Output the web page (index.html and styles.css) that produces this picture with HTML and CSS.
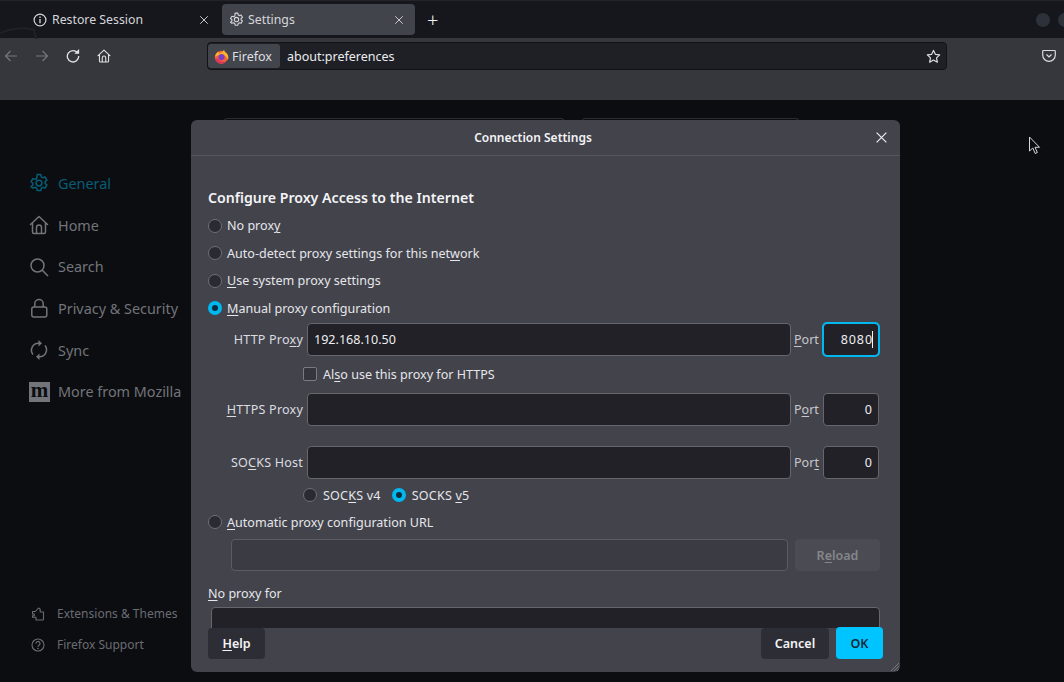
FILE: index.html
```html
<!DOCTYPE html>
<html lang="en">
<head>
<meta charset="utf-8">
<title>Settings</title>
<link rel="stylesheet" href="styles.css">
</head>
<body>
<svg class="defs" width="0" height="0">
  <symbol id="gear" viewBox="0 0 20 20"><path fill="none" stroke="currentColor" stroke-width="1.5" stroke-linejoin="round" d="M8.2 1.5h3.6l.5 2.4 1.5.9 2.3-.8 1.8 3.1-1.8 1.6v1.7l1.8 1.6-1.8 3.1-2.3-.8-1.5.9-.5 2.4H8.2l-.5-2.4-1.5-.9-2.3.8L2.1 13.6l1.8-1.6v-1.7L2.1 8.7l1.8-3.1 2.3.8 1.5-.9z"/><circle cx="10" cy="10.1" r="2.9" fill="none" stroke="currentColor" stroke-width="1.5"/></symbol>
  <symbol id="house" viewBox="0 0 20 20"><path fill="none" stroke="currentColor" stroke-width="1.5" stroke-linejoin="round" stroke-linecap="round" d="M1.5 9.5 10 1.5l8.500 8M3.500 8v9a1.500 1.500 0 0 0 1.500 1.500h10a1.500 1.500 0 0 0 1.500-1.500V8M7.500 18.500V12.500a2.500 2.500 0 0 1 5 0v6"/></symbol>
  <symbol id="close" viewBox="0 0 12 12"><path fill="none" stroke="currentColor" stroke-width="1.200" d="M1.500 1.500l9 9M10.500 1.500l-9 9"/></symbol>
</svg>

<header class="tabbar">
  <svg class="wallpaper" viewBox="0 0 90 38"><path fill="none" stroke="#1f2126" stroke-width="2" d="M0 32C12 27 26 26 34 29l2 9"/></svg>
  <div class="tab">
    <svg class="tab-icon" viewBox="0 0 14 14"><circle cx="7" cy="7" r="5.900" fill="none" stroke="currentColor" stroke-width="1.200"/><path stroke="currentColor" stroke-width="1.300" d="M7 6v4.200M7 3.600v1.300"/></svg>
    <span class="tab-title">Restore Session</span>
    <svg class="tab-close"><use href="#close"/></svg>
  </div>
  <div class="tab tab-active">
    <svg class="tab-icon tab-gear"><use href="#gear"/></svg>
    <span class="tab-title">Settings</span>
    <svg class="tab-close"><use href="#close"/></svg>
  </div>
  <span class="new-tab">+</span>
  <div class="win-buttons"><span class="win-dot"></span><span class="win-dot"></span></div>
</header>

<div class="toolbar">
  <div class="nav-row">
    <div class="nav-buttons">
      <svg class="nav-icon dim" viewBox="0 0 14 14"><path fill="none" stroke="currentColor" stroke-width="1.200" d="M13 7H1.500M6.500 2 1.500 7l5 5"/></svg>
      <svg class="nav-icon dim" viewBox="0 0 14 14"><path fill="none" stroke="currentColor" stroke-width="1.200" d="M1 7h11.500M7.500 2l5 5-5 5"/></svg>
      <svg class="nav-icon" viewBox="0 0 14 14"><path fill="none" stroke="currentColor" stroke-width="1.300" d="M11.800 4.200A5.700 5.700 0 1 0 12.700 7"/><path fill="currentColor" d="M8.300 4.800h4.800V0z"/></svg>
      <svg class="nav-icon"><use href="#house"/></svg>
    </div>
    <div class="urlbar">
      <div class="identity">
        <svg class="fx-logo" viewBox="0 0 16 16">
          <circle cx="7.800" cy="8.800" r="6.900" fill="#f3603a"/>
          <path fill="#ffb32c" d="M1 8C1.800 5 3.500 3.300 5 2.800c-.4 1 0 1.600.6 1.900C7 3.500 9.500 3.700 10.500.8c1 1.300 1 2 1 2.500 2 .8 3.800 2.900 3.800 5.700 0 1-.3 2-.7 2.800C13.800 8.500 12 7 9.500 6.500 6 6 3.500 7 1 8z"/>
          <path fill="#e0335f" d="M1.200 10c1 3 3.800 5.500 6.800 5.500 2 0 3.800-.8 5-2.400C10.500 14 6 13.500 4 10z"/>
          <circle cx="8" cy="8.600" r="3.300" fill="#7a3fc4"/>
        </svg>
        <span>Firefox</span>
      </div>
      <span class="url-text">about:preferences</span>
      <svg class="star" viewBox="0 0 16 16"><path fill="none" stroke="currentColor" stroke-width="1.300" stroke-linejoin="round" d="M8 1.500l2 4.200 4.600.6-3.400 3.200.9 4.600L8 11.800l-4.100 2.300.9-4.600L1.400 6.300 6 5.700z"/></svg>
    </div>
    <svg class="pocket" viewBox="0 0 14 14"><path fill="none" stroke="currentColor" stroke-width="1.200" d="M1.500 1.500h11a.8.8 0 0 1 .8.800V6a6.300 6.300 0 0 1-12.600 0V2.300a.8.8 0 0 1 .8-.8z"/><path fill="none" stroke="currentColor" stroke-width="1.200" d="M4.500 5.500 7 8l2.500-2.500"/></svg>
  </div>
</div>

<main class="content">
  <nav class="side-nav">
    <a class="side-item side-active"><svg class="side-icon"><use href="#gear"/></svg>General</a>
    <a class="side-item"><svg class="side-icon"><use href="#house"/></svg>Home</a>
    <a class="side-item"><svg class="side-icon" viewBox="0 0 20 20"><circle cx="8.500" cy="8.500" r="6.500" fill="none" stroke="currentColor" stroke-width="1.500"/><path stroke="currentColor" stroke-width="1.600" d="M13.300 13.300l5.700 5.700"/></svg>Search</a>
    <a class="side-item"><svg class="side-icon" viewBox="0 0 20 20"><rect x="2.800" y="9" width="15" height="10" rx="2" fill="none" stroke="currentColor" stroke-width="1.500"/><path fill="none" stroke="currentColor" stroke-width="1.500" d="M5.800 9V5.700a4.200 4.200 0 0 1 8.400 0V9"/></svg>Privacy &amp; Security</a>
    <a class="side-item"><svg class="side-icon" viewBox="0 0 20 20"><path fill="none" stroke="currentColor" stroke-width="1.500" d="M4 14.500A7 7 0 0 1 10 3.200h1.500M16 5.500A7 7 0 0 1 10 16.800H8.500"/><path fill="currentColor" d="M9.500 0v6.500l3.500-3.200zM10.500 13.500V20L7 16.800z"/></svg>Sync</a>
    <a class="side-item"><span class="moz-logo">m</span>More from Mozilla</a>
  </nav>
  <nav class="side-foot">
    <a class="foot-item"><svg class="foot-icon" viewBox="0 0 14 14"><path fill="none" stroke="currentColor" stroke-width="1.100" stroke-linejoin="round" d="M1.500 4.500h2.800L7.500 1l1.700 1.200V5H12.500v7a1 1 0 0 1-1 1H5v-2.700H1.500V8.800h1.800V7H1.500z"/></svg>Extensions &amp; Themes</a>
    <a class="foot-item"><svg class="foot-icon" viewBox="0 0 14 14"><circle cx="7" cy="7" r="6" fill="none" stroke="currentColor" stroke-width="1.100"/><path fill="none" stroke="currentColor" stroke-width="1.200" d="M5 5.500a2 2 0 1 1 3 1.700c-.7.400-1 .8-1 1.500"/><circle cx="7" cy="10.500" r=".8" fill="currentColor"/></svg>Firefox Support</a>
  </nav>
  <div class="ghost-box ghost-a"></div>
  <div class="ghost-box ghost-b"></div>
</main>

<div class="cursor">
  <svg viewBox="0 0 14 20" width="14" height="20"><path fill="#0c0d11" stroke="#d8d8da" stroke-width="1" d="M1.500 1v14l3.300-3 2.400 5.500 2.200-1-2.400-5.200h4.500z"/></svg>
</div>

<section class="dialog">
  <header class="dialog-head">
    <h1 class="dialog-title">Connection Settings</h1>
    <svg class="dialog-close"><use href="#close"/></svg>
  </header>
  <div class="dialog-body">
    <h2 class="section-title">Configure Proxy Access to the Internet</h2>
    <label class="radio-row"><span class="radio"></span><span>No prox<u>y</u></span></label>
    <label class="radio-row"><span class="radio"></span><span>Auto-detect proxy settings for this net<u>w</u>ork</span></label>
    <label class="radio-row"><span class="radio"></span><span><u>U</u>se system proxy settings</span></label>
    <label class="radio-row"><span class="radio radio-on"></span><span><u>M</u>anual proxy configuration</span></label>

    <div class="proxy-row">
      <span class="proxy-label">HTTP Pro<u>x</u>y</span>
      <div class="field host-field">192.168.10.50</div>
      <span class="port-label"><u>P</u>ort</span>
      <div class="field port-field port-focus">8080<i class="caret"></i></div>
    </div>
    <label class="check-row"><span class="checkbox"></span><span>Al<u>s</u>o use this proxy for HTTPS</span></label>
    <div class="proxy-row">
      <span class="proxy-label"><u>H</u>TTPS Proxy</span>
      <div class="field host-field"></div>
      <span class="port-label">P<u>o</u>rt</span>
      <div class="field port-field">0</div>
    </div>
    <div class="proxy-row proxy-socks">
      <span class="proxy-label">SO<u>C</u>KS Host</span>
      <div class="field host-field"></div>
      <span class="port-label">Por<u>t</u></span>
      <div class="field port-field">0</div>
    </div>
    <div class="socks-row">
      <label class="socks-opt"><span class="radio"></span><span>SOC<u>K</u>S v4</span></label>
      <label class="socks-opt"><span class="radio radio-on"></span><span>SOCKS <u>v</u>5</span></label>
    </div>
    <label class="radio-row radio-auto"><span class="radio"></span><span><u>A</u>utomatic proxy configuration URL</span></label>
    <div class="auto-row">
      <div class="field auto-field"></div>
      <button class="btn btn-disabled">R<u>e</u>load</button>
    </div>
    <div class="noproxy-label"><u>N</u>o proxy for</div>
    <div class="noproxy-clip"><div class="field noproxy-field"></div></div>
  </div>
  <footer class="dialog-foot">
    <button class="btn btn-help"><u>H</u>elp</button>
    <button class="btn btn-cancel">Cancel</button>
    <button class="btn btn-ok">OK</button>
  </footer>
  <svg class="grip" viewBox="0 0 8 8"><path stroke="#77777c" stroke-width="1" d="M8 0 0 8M8 3 3 8M8 6 6 8"/></svg>
</section>
</body>
</html>
```
FILE: styles.css
```css
* { box-sizing: border-box; }
html, body { margin: 0; padding: 0; height: 682px; overflow: hidden; }
body {
  position: relative;
  display: flex;
  flex-direction: column;
  background: #0c0d11;
  color: #fbfbfe;
  font-family: "Noto Sans", sans-serif;
  font-size: 13px;
}
.defs { position: absolute; }
u { text-underline-offset: 2px; text-decoration-thickness: 1px; }

/* tabs */
.tabbar {
  position: relative;
  height: 38px;
  flex: none;
  display: flex;
  align-items: center;
  padding: 3px 0 3px 26px;
  background: #15171c;
  border-top: 1px solid #22242a;
}
.wallpaper { position: absolute; left: 0; top: 0; width: 90px; height: 38px; }
.tab {
  position: relative;
  width: 196px;
  height: 31px;
  display: flex;
  align-items: center;
  padding: 0 7px;
  border-radius: 4px;
  color: #d6d6da;
  font-size: 12.300px;
  flex: none;
}
.tab-active { background: #42444b; width: 193px; }
.tab-icon { width: 14px; height: 14px; margin-right: 5px; flex: none; }
.tab-gear { width: 15px; height: 15px; margin-right: 4px; }
.tab-title { flex: 1; }
.tab-close { width: 10px; height: 10px; margin-right: 6px; color: #c8c8cc; }
.tab-active .tab-close { margin-right: 4px; }
.new-tab { margin-left: 12px; font-size: 20px; line-height: 1; color: #f0f0f2; font-weight: 300; }
.win-buttons { margin-left: auto; display: flex; gap: 8px; margin-right: -8px; }
.win-dot { width: 14px; height: 14px; border-radius: 50%; background: #2d3139; }

/* toolbar */
.toolbar {
  height: 62px;
  flex: none;
  background: #35373d;
  padding-top: 4px;
}
.nav-row { display: flex; align-items: center; height: 28px; }
.nav-buttons { width: 207px; display: flex; gap: 17px; padding-left: 4px; color: #e4e4e7; flex: none; }
.nav-icon { width: 14px; height: 14px; flex: none; }
.nav-icon.dim { color: #74767b; }
.urlbar {
  width: 740px;
  height: 28px;
  flex: none;
  display: flex;
  align-items: center;
  background: #1e2025;
  border: 1px solid #121317;
  border-radius: 4px;
  padding: 1px 4px 1px 0;
}
.identity {
  width: 72px;
  height: 24px;
  display: flex;
  align-items: center;
  gap: 3px;
  padding: 0 6px;
  background: #43454c;
  border-radius: 3px;
  color: #dfdfe2;
  font-size: 12.500px;
}
.fx-logo { width: 15px; height: 15px; flex: none; }
.url-text { margin-left: 7px; flex: 1; color: #ececef; font-size: 12.500px; }
.star { width: 15px; height: 15px; margin-right: 1px; color: #dfdfe3; }
.pocket { width: 14px; height: 14px; margin-left: 95px; color: #dcdce0; }

/* settings behind */
.content { flex: 1; position: relative; background: #0c0d11; }
.side-nav { position: absolute; left: 29px; top: 62.500px; display: flex; flex-direction: column; }
.side-item {
  height: 41.700px;
  display: flex;
  align-items: center;
  gap: 9px;
  color: #72747a;
  font-size: 14.400px;
  white-space: nowrap;
}
.side-active { color: #075d75; }
.side-icon { width: 20px; height: 20px; flex: none; }
.moz-logo {
  width: 21px;
  height: 20px;
  background: #72747a;
  color: #0c0d11;
  font-family: "Liberation Serif", serif;
  font-weight: 700;
  font-size: 21px;
  line-height: 17px;
  text-align: center;
  margin-right: -1px;
}
.side-foot { position: absolute; left: 31px; top: 503px; display: flex; flex-direction: column; gap: 10px; }
.foot-item {
  height: 21px;
  display: flex;
  align-items: center;
  gap: 12px;
  color: #6a6c72;
  font-size: 12px;
}
.foot-icon { width: 14px; height: 14px; flex: none; }
.ghost-box { position: absolute; top: 18px; height: 4px; border: 1px solid #2a2b30; border-bottom: 0; border-radius: 3px 3px 0 0; }
.ghost-a { left: 224px; width: 340px; }
.ghost-b { left: 582px; width: 217px; }

.cursor { position: absolute; left: 1028px; top: 136px; line-height: 0; }

/* dialog */
.dialog {
  position: absolute;
  left: 191px;
  top: 120px;
  width: 709px;
  height: 552px;
  background: #42434b;
  border-radius: 6px;
  display: flex;
  flex-direction: column;
  overflow: hidden;
}
.dialog-head {
  height: 36px;
  flex: none;
  border-bottom: 1px solid #56575e;
  position: relative;
  display: flex;
  align-items: center;
  justify-content: center;
  padding-right: 25px;
}
.dialog-title { margin: 0; font-size: 12px; font-weight: 600; color: #f4f4f6; }
.dialog-close { position: absolute; right: 12px; top: 11px; width: 13px; height: 13px; color: #e6e6e9; }
.dialog-body {
  height: 472px;
  flex: none;
  padding: 0 20px 0 17px;
  color: #e6e6ea;
  font-size: 12.550px;
}
.section-title {
  margin: 32px 0 0;
  height: 20px;
  line-height: 20px;
  font-size: 14.150px;
  font-weight: 600;
  color: #f4f4f6;
}
.radio-row { display: flex; align-items: center; gap: 5px; height: 27.500px; }
.section-title + .radio-row { margin-top: 4px; }
.radio {
  width: 14px;
  height: 14px;
  border-radius: 50%;
  background: #2b2a33;
  border: 1px solid #6f7076;
  flex: none;
}
.radio-on { background: #0b2b3a; border: 4px solid #00b8ef; }
.proxy-row { display: flex; align-items: center; height: 34px; }
.proxy-socks { margin-top: 19px; }
.proxy-label { width: 99px; flex: none; text-align: right; padding: 1px 4px 0 0; color: #dcdce0; letter-spacing: .2px; white-space: nowrap; }
.field {
  height: 33px;
  background: #212127;
  border: 1px solid #66676d;
  border-radius: 4px;
  color: #eeeef1;
  display: flex;
  align-items: center;
}
.host-field { width: 484px; padding-left: 6px; flex: none; }
.port-label { width: 32px; flex: none; padding-left: 3px; color: #c8c8cc; }
.port-field {
  width: 56px;
  flex: none;
  justify-content: flex-end;
  padding-right: 6px;
}
.port-focus { outline: 2px solid #00b8ef; outline-offset: -1px; padding-right: 5px; letter-spacing: .9px; }
.caret { width: 1px; height: 17px; background: #f2f2f4; margin-left: -1px; }
.check-row { display: flex; align-items: center; gap: 6px; height: 36px; padding-left: 95px; }
.checkbox {
  width: 14px;
  height: 14px;
  border: 1px solid #7a7b81;
  border-radius: 2px;
  background: #35363d;
  flex: none;
}
.socks-row { display: flex; height: 32px; align-items: center; gap: 11px; padding-left: 95px; letter-spacing: .2px; }
.socks-opt { display: flex; align-items: center; gap: 6px; }
.radio-auto { height: 22px; }
.auto-row { display: flex; gap: 7px; margin-top: 6px; padding-left: 23px; align-items: center; }
.auto-field { width: 557px; height: 32px; background: #3b3c43; border-color: #5b5c62; flex: none; }
.btn {
  border: 0;
  border-radius: 4px;
  font-family: inherit;
  font-size: 12.500px;
  font-weight: 600;
  padding: 0;
  color: #f4f4f6;
}
.btn-disabled { width: 85px; height: 32px; background: #4b4c53; color: #85868b; }
.noproxy-label { margin-top: 13px; height: 20px; line-height: 20px; }
.noproxy-clip { height: 21px; overflow: hidden; padding-left: 3px; margin-top: 3px; }
.noproxy-field { width: 669px; height: 33px; }
.dialog-foot { height: 32px; flex: none; display: flex; gap: 7px; padding: 0 17px; align-items: flex-start; }
.btn-help { width: 57px; height: 31px; background: #2d2e35; margin-right: auto; }
.btn-cancel { width: 68px; height: 31px; background: #2d2e35; }
.btn-ok { width: 47px; height: 32px; background: #00c4ff; color: #10293a; margin-top: -1px; }
.grip { position: absolute; right: 1px; bottom: 1px; width: 8px; height: 8px; }
```
